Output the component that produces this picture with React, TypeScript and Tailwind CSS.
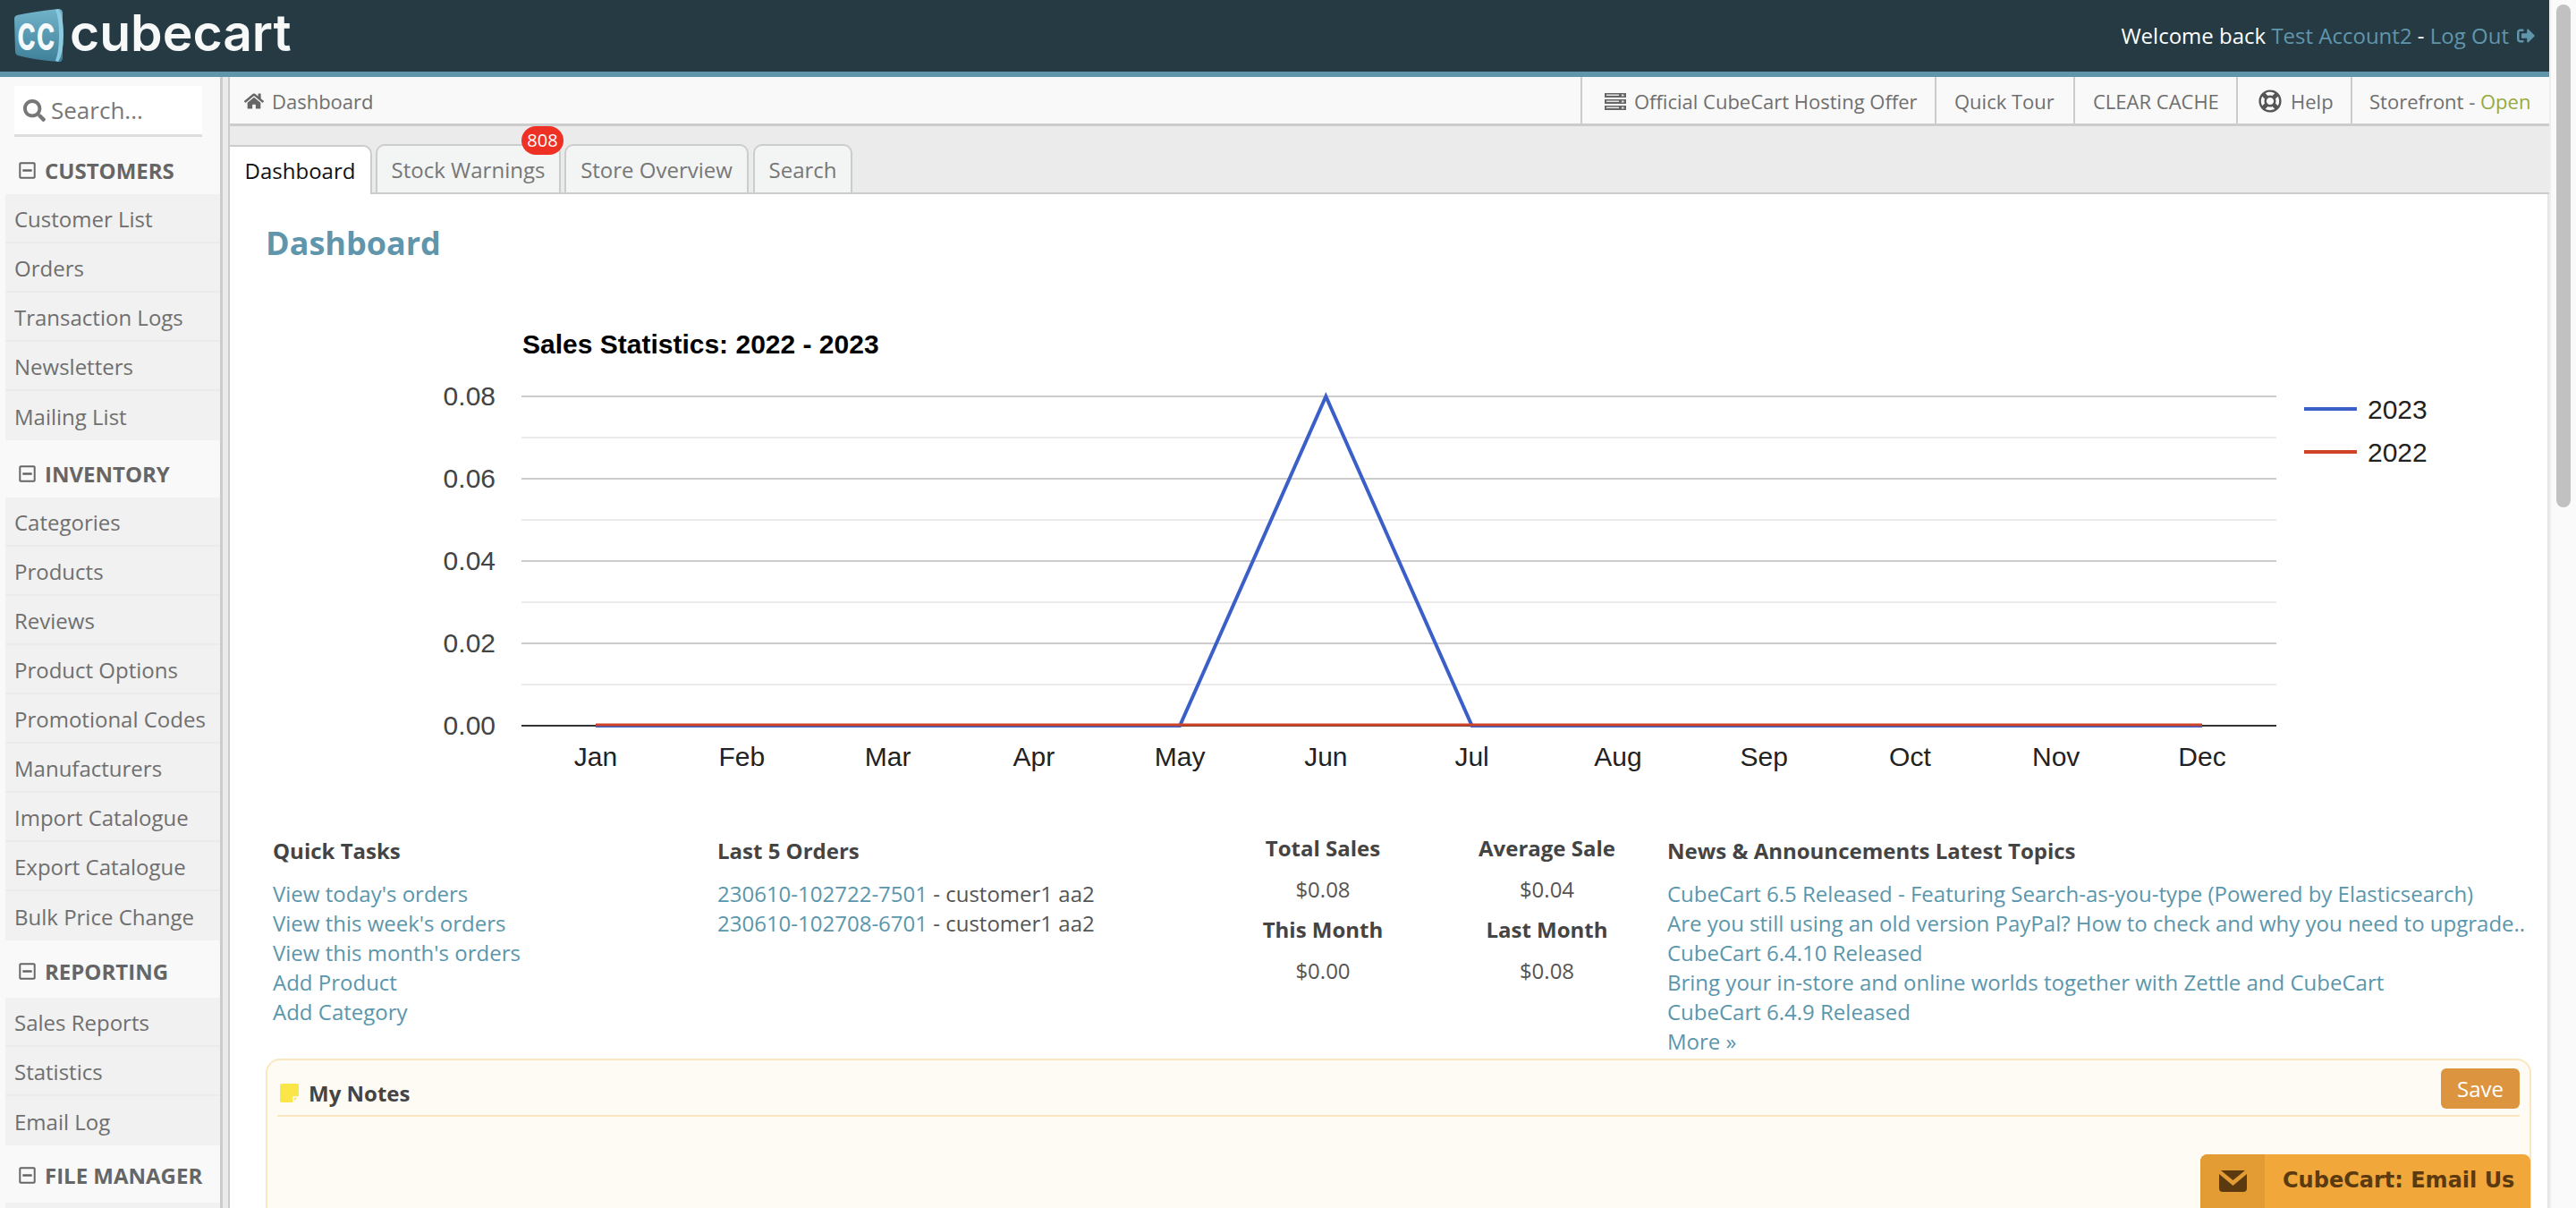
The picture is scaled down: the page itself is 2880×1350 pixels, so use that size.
import React from "react";
import { FaHome, FaSearch, FaRegLifeRing, FaSignOutAlt, FaRegMinusSquare } from "react-icons/fa";

const menu = [
  { title: "CUSTOMERS", pad: "pb-[10px]", items: ["Customer List", "Orders", "Transaction Logs", "Newsletters", "Mailing List"] },
  {
    title: "INVENTORY",
    pad: "pb-[10px]",
    items: ["Categories", "Products", "Reviews", "Product Options", "Promotional Codes", "Manufacturers", "Import Catalogue", "Export Catalogue", "Bulk Price Change"],
  },
  { title: "REPORTING", pad: "pb-[13px]", items: ["Sales Reports", "Statistics", "Email Log"] },
  { title: "FILE MANAGER", pad: "pb-[14px]", items: [""] },
];

const months = ["Jan", "Feb", "Mar", "Apr", "May", "Jun", "Jul", "Aug", "Sep", "Oct", "Nov", "Dec"];

const quickTasks = ["View today's orders", "View this week's orders", "View this month's orders", "Add Product", "Add Category"];

const news = [
  "CubeCart 6.5 Released - Featuring Search-as-you-type (Powered by Elasticsearch)",
  "Are you still using an old version PayPal? How to check and why you need to upgrade..",
  "CubeCart 6.4.10 Released",
  "Bring your in-store and online worlds together with Zettle and CubeCart",
  "CubeCart 6.4.9 Released",
  "More »",
];

function Logo() {
  return (
    <div className="flex items-center h-full pl-[16px]">
      <svg width="56" height="78" viewBox="0 -9 56 78" className="shrink-0">
        <defs>
          <linearGradient id="cube" x1="0" y1="0" x2="0" y2="1">
            <stop offset="0" stopColor="#71b3c9" />
            <stop offset="1" stopColor="#3f8099" />
          </linearGradient>
        </defs>
        <path d="M3 7 Q22 3 49 0 Q54 0 54 5 L54 54 Q54 60 49 59 Q22 57 4 52 Q1 51 1 47 L0 11 Q0 8 3 7 Z" fill="url(#cube)" />
        <path d="M46 1 L49 0 Q55 8 55 29 Q55 50 49 59 L46 58 Q50 48 50 29 Q50 10 46 1 Z" fill="#8ccbdf" />
        <text transform="translate(3 46) scale(0.68 1)" fontFamily="Inter, sans-serif" fontWeight="600" fontSize="54" fill="#f4fafc">cc</text>
      </svg>
      <span className="ml-[6px] font-['Inter',sans-serif] text-[57px] leading-[70px] font-semibold text-[#f7f8f8] mb-[6px]">cubecart</span>
    </div>
  );
}

function ServerIcon() {
  return (
    <svg width="24" height="19" viewBox="0 0 24 19" className="shrink-0">
      {[0, 7, 14].map((y) => (
        <g key={y}>
          <rect x="0" y={y} width="24" height="5" fill="#666666" />
          <rect x="2" y={y + 1.5} width="14" height="1.5" fill="#e4e4e4" />
          <rect x="19" y={y + 1.5} width="2.5" height="2" fill="#e4e4e4" />
        </g>
      ))}
    </svg>
  );
}

function Sidebar() {
  return (
    <aside className="w-[249px] shrink-0 bg-[#f9f9f9] border-r-[3px] border-[#cccccc] overflow-hidden">
      <div className="mx-[16px] mt-[10px] w-[210px] h-[57px] bg-white border-b-[3px] border-[#dddddd] flex items-center pl-[10px] text-[#777777]">
        <FaSearch className="text-[25px]" />
        <span className="ml-[6px] text-[26px]">Search...</span>
      </div>
      {menu.map((group) => (
        <div key={group.title}>
          <div className={`h-[64px] flex items-end ${group.pad} pl-[20px] text-[#666666]`}>
            <FaRegMinusSquare className="text-[21px] mb-[6px]" />
            <span className="ml-[9px] text-[24px] leading-[33px] font-bold">{group.title}</span>
          </div>
          {group.items.map((item, i) => (
            <div key={i} className="ml-[6px] h-[55px] bg-[#f1f1f1] border-b-[2px] border-[#ebebeb] last:border-b-0 flex items-center pl-[10px] pt-[2px] text-[24px] text-[#6f6f6f]">
              {item}
            </div>
          ))}
        </div>
      ))}
    </aside>
  );
}

function TopBar() {
  return (
    <div className="h-[55px] shrink-0 flex bg-[#f9f9f9] border-b-[3px] border-[#cccccc] text-[22px] text-[#6f6f6f]">
      <div className="flex-1 flex items-center pl-[16px] pt-[2px]">
        <FaHome className="text-[22px] text-[#666666]" />
        <span className="ml-[9px]">Dashboard</span>
      </div>
      <div className="flex items-center pl-[25px] pr-[21px] pt-[2px] h-full border-l-2 border-[#cccccc] w-[396px]">
        <ServerIcon />
        <span className="ml-[9px] whitespace-nowrap">Official CubeCart Hosting Offer</span>
      </div>
      <div className="flex items-center pl-[20px] pt-[2px] h-full border-l-2 border-[#cccccc] w-[155px]">Quick Tour</div>
      <div className="flex items-center pl-[20px] pt-[2px] h-full border-l-2 border-[#cccccc] w-[182px]">CLEAR CACHE</div>
      <div className="flex items-center pl-[23px] pt-[2px] h-full border-l-2 border-[#cccccc] w-[128px]">
        <FaRegLifeRing className="text-[26px] text-[#555555]" />
        <span className="ml-[10px]">Help</span>
      </div>
      <div className="flex items-center pl-[19px] pt-[2px] h-full border-l-2 border-[#cccccc] w-[222px] whitespace-nowrap">
        Storefront -&nbsp;<span className="text-[#94ab3e]">Open</span>
      </div>
    </div>
  );
}

function Tabs() {
  return (
    <div className="h-[76px] shrink-0 bg-[#ebebeb] border-b-[2px] border-[#cccccc] flex items-end gap-[4px] text-[24px]">
      <div className="h-[55px] -mb-[2px] w-[159px] pt-[1px] bg-white border-2 border-b-0 border-l-0 border-[#cccccc] rounded-tr-[10px] flex items-center justify-center text-[#111111]">Dashboard</div>
      <div className="relative h-[54px] w-[207px] pt-[1px] bg-[#f3f4f4] border-2 border-b-0 border-[#cccccc] rounded-t-[10px] flex items-center justify-center text-[#777777]">
        Stock Warnings
        <span className="absolute -top-[22px] right-[-5px] w-[47px] h-[32px] rounded-[16px] bg-[#ee3124] text-white text-[20px] flex items-center justify-center">808</span>
      </div>
      <div className="h-[54px] w-[206px] pt-[1px] bg-[#f3f4f4] border-2 border-b-0 border-[#cccccc] rounded-t-[10px] flex items-center justify-center text-[#777777]">Store Overview</div>
      <div className="h-[54px] w-[111px] pt-[1px] ml-[1px] bg-[#f3f4f4] border-2 border-b-0 border-[#cccccc] rounded-t-[10px] flex items-center justify-center text-[#777777]">Search</div>
    </div>
  );
}

function Chart() {
  const x = (i: number) => 667 + i * 163.27;
  const top = 443;
  const step = 92;
  const baseline = top + step * 4;
  return (
    <svg width="2592" height="560" viewBox="258 340 2592 560" className="block" fontFamily="'Liberation Sans', Arial, sans-serif">
      <text x="585" y="395" fontSize="30" fontWeight="700" fill="#000000">Sales Statistics: 2022 - 2023</text>
      {[0, 1, 2, 3, 4, 5, 6, 7].map((i) => (
        <line key={i} x1="584" x2="2546" y1={top + (i * step) / 2} y2={top + (i * step) / 2} stroke={i % 2 === 0 ? "#cccccc" : "#ebebeb"} strokeWidth="2" />
      ))}
      {["0.08", "0.06", "0.04", "0.02", "0.00"].map((t, i) => (
        <text key={t} x="555" y={top + i * step + 10} fontSize="30" textAnchor="end" fill="#444444">{t}</text>
      ))}
      <line x1="584" x2="2546" y1={baseline} y2={baseline} stroke="#333333" strokeWidth="2" />
      <polyline
        points={`${x(0)},${baseline} ${x(4)},${baseline} ${x(5)},${top} ${x(6)},${baseline} ${x(11)},${baseline}`}
        fill="none"
        stroke="#3b5fc9"
        strokeWidth="4"
      />
      <line x1={x(0)} x2={x(11)} y1={baseline - 1} y2={baseline - 1} stroke="#cf4427" strokeWidth="3" />
      {months.map((m, i) => (
        <text key={m} x={x(i)} y="856" fontSize="30" textAnchor="middle" fill="#222222">{m}</text>
      ))}
      <line x1="2577" x2="2636" y1="457" y2="457" stroke="#3b5fc9" strokeWidth="4" />
      <text x="2648" y="468" fontSize="30" fill="#222222">2023</text>
      <line x1="2577" x2="2636" y1="505" y2="505" stroke="#cf4427" strokeWidth="4" />
      <text x="2648" y="516" fontSize="30" fill="#222222">2022</text>
    </svg>
  );
}

function Stat({ label, value }: { label: string; value: string }) {
  return (
    <div className="text-center h-[91px]">
      <div className="font-bold text-[#444444] leading-[33px]">{label}</div>
      <div className="mt-[13px] text-[#555555] leading-[33px]">{value}</div>
    </div>
  );
}

function Overview() {
  return (
    <div className="flex h-[283px] pt-[29px] pl-[46px] text-[24px]">
      <div className="w-[498px] shrink-0 pl-[2px]">
        <h4 className="font-bold text-[#444444] leading-[33px] mt-[5px]">Quick Tasks</h4>
        <div className="mt-[15px] text-[#5a96ac] leading-[33px]">
          {quickTasks.map((t) => (
            <div key={t}>{t}</div>
          ))}
        </div>
      </div>
      <div className="w-[554px] shrink-0 pl-[1px]">
        <h4 className="font-bold text-[#444444] leading-[33px] mt-[5px]">Last 5 Orders</h4>
        <div className="mt-[15px] leading-[33px] text-[#555555]">
          <div><span className="text-[#5a96ac]">230610-102722-7501</span> - customer1 aa2</div>
          <div><span className="text-[#5a96ac]">230610-102708-6701</span> - customer1 aa2</div>
        </div>
      </div>
      <div className="w-[248px] shrink-0 pt-[2px]">
        <Stat label="Total Sales" value="$0.08" />
        <Stat label="This Month" value="$0.00" />
      </div>
      <div className="w-[261px] shrink-0 pt-[2px] pr-[8px]">
        <Stat label="Average Sale" value="$0.04" />
        <Stat label="Last Month" value="$0.08" />
      </div>
      <div className="min-w-0 flex-1">
        <h4 className="font-bold text-[#444444] leading-[33px] mt-[5px]">News &amp; Announcements Latest Topics</h4>
        <div className="mt-[15px] text-[#5a96ac] leading-[33px]">
          {news.map((t) => (
            <div key={t} className="whitespace-nowrap">{t}</div>
          ))}
        </div>
      </div>
    </div>
  );
}

function Notes() {
  return (
    <div className="ml-[40px] mr-[18px] h-[400px] bg-[#fefbf4] border-2 border-[#fae7c0] rounded-[16px] px-[11px]">
      <div className="h-[54px] mt-[9px] flex items-center justify-between border-b-2 border-[#fae7c0]">
        <div className="flex items-center pl-[3px] pt-[3px]">
          <svg width="21" height="21" viewBox="0 0 21 21">
            <path d="M2 0 H19 Q21 0 21 2 V14 L14 21 H2 Q0 21 0 19 V2 Q0 0 2 0 Z" fill="#fbe64a" />
            <path d="M15 21 V15 H21" fill="none" stroke="#fefbf4" strokeWidth="1.5" />
          </svg>
          <span className="ml-[11px] text-[24px] font-bold text-[#444444]">My Notes</span>
        </div>
        <div className="w-[88px] h-[45px] mb-[7px] rounded-[6px] bg-[#dd943e] text-white text-[24px] flex items-center justify-center">Save</div>
      </div>
    </div>
  );
}

function EmailTab() {
  return (
    <div className="absolute left-[2460px] top-[1290px] w-[369px] h-[60px] rounded-t-[8px] bg-[#f2a73b] flex overflow-hidden text-[#5b3a10]">
      <div className="w-[72px] bg-[#e39c33] flex items-start justify-center pt-[18px]">
        <svg width="31" height="24" viewBox="0 0 31 24">
          <path d="M2 0 H29 L15.5 11 Z" fill="#5b3a10" />
          <path d="M0 4 L15.5 17 L31 4 V20 Q31 24 27 24 H4 Q0 24 0 20 Z" fill="#5b3a10" />
        </svg>
      </div>
      <div className="pl-[20px] pt-[14px] font-['DejaVu_Sans',sans-serif] font-bold text-[24px] leading-[30px] whitespace-nowrap">CubeCart: Email Us</div>
    </div>
  );
}

export default function App() {
  return (
    <div className="relative h-[1350px] w-[2880px] flex overflow-hidden font-['Open_Sans',sans-serif] bg-[#f9f9f9]">
      <div className="w-[2850px] shrink-0 flex flex-col">
        <header className="h-[86px] shrink-0 bg-[#263a44] border-b-[6px] border-[#5f96ab] flex items-center justify-between">
          <Logo />
          <div className="pr-[16px] text-[24px] text-white flex items-center">
            Welcome back&nbsp;<span className="text-[#5f96ab]">Test Account2</span>&nbsp;-&nbsp;<span className="text-[#5f96ab]">Log Out</span>
            <FaSignOutAlt className="ml-[9px] text-[20px] text-[#5f96ab]" />
          </div>
        </header>
        <div className="flex-1 flex min-h-0">
          <Sidebar />
          <div className="flex-1 min-w-0 bg-[#ebebeb] pl-[6px]">
            <div className="h-full flex flex-col border-l-2 border-[#cccccc]">
              <TopBar />
              <Tabs />
              <main className="flex-1 min-h-0 bg-white border-r-2 border-[#e6e6e6] overflow-hidden">
                <h1 className="pl-[40px] pt-[31px] h-[123px] text-[36px] leading-[48px] font-bold text-[#5f96ab]">Dashboard</h1>
                <Chart />
                <Overview />
                <Notes />
              </main>
            </div>
          </div>
        </div>
      </div>
      <div className="flex-1 bg-[#fafafa] border-l-2 border-[#eeeeee] pt-[5px] pl-[6px]">
        <div className="w-[16px] h-[562px] rounded-full bg-[#c1c1c1]" />
      </div>
      <EmailTab />
    </div>
  );
}
